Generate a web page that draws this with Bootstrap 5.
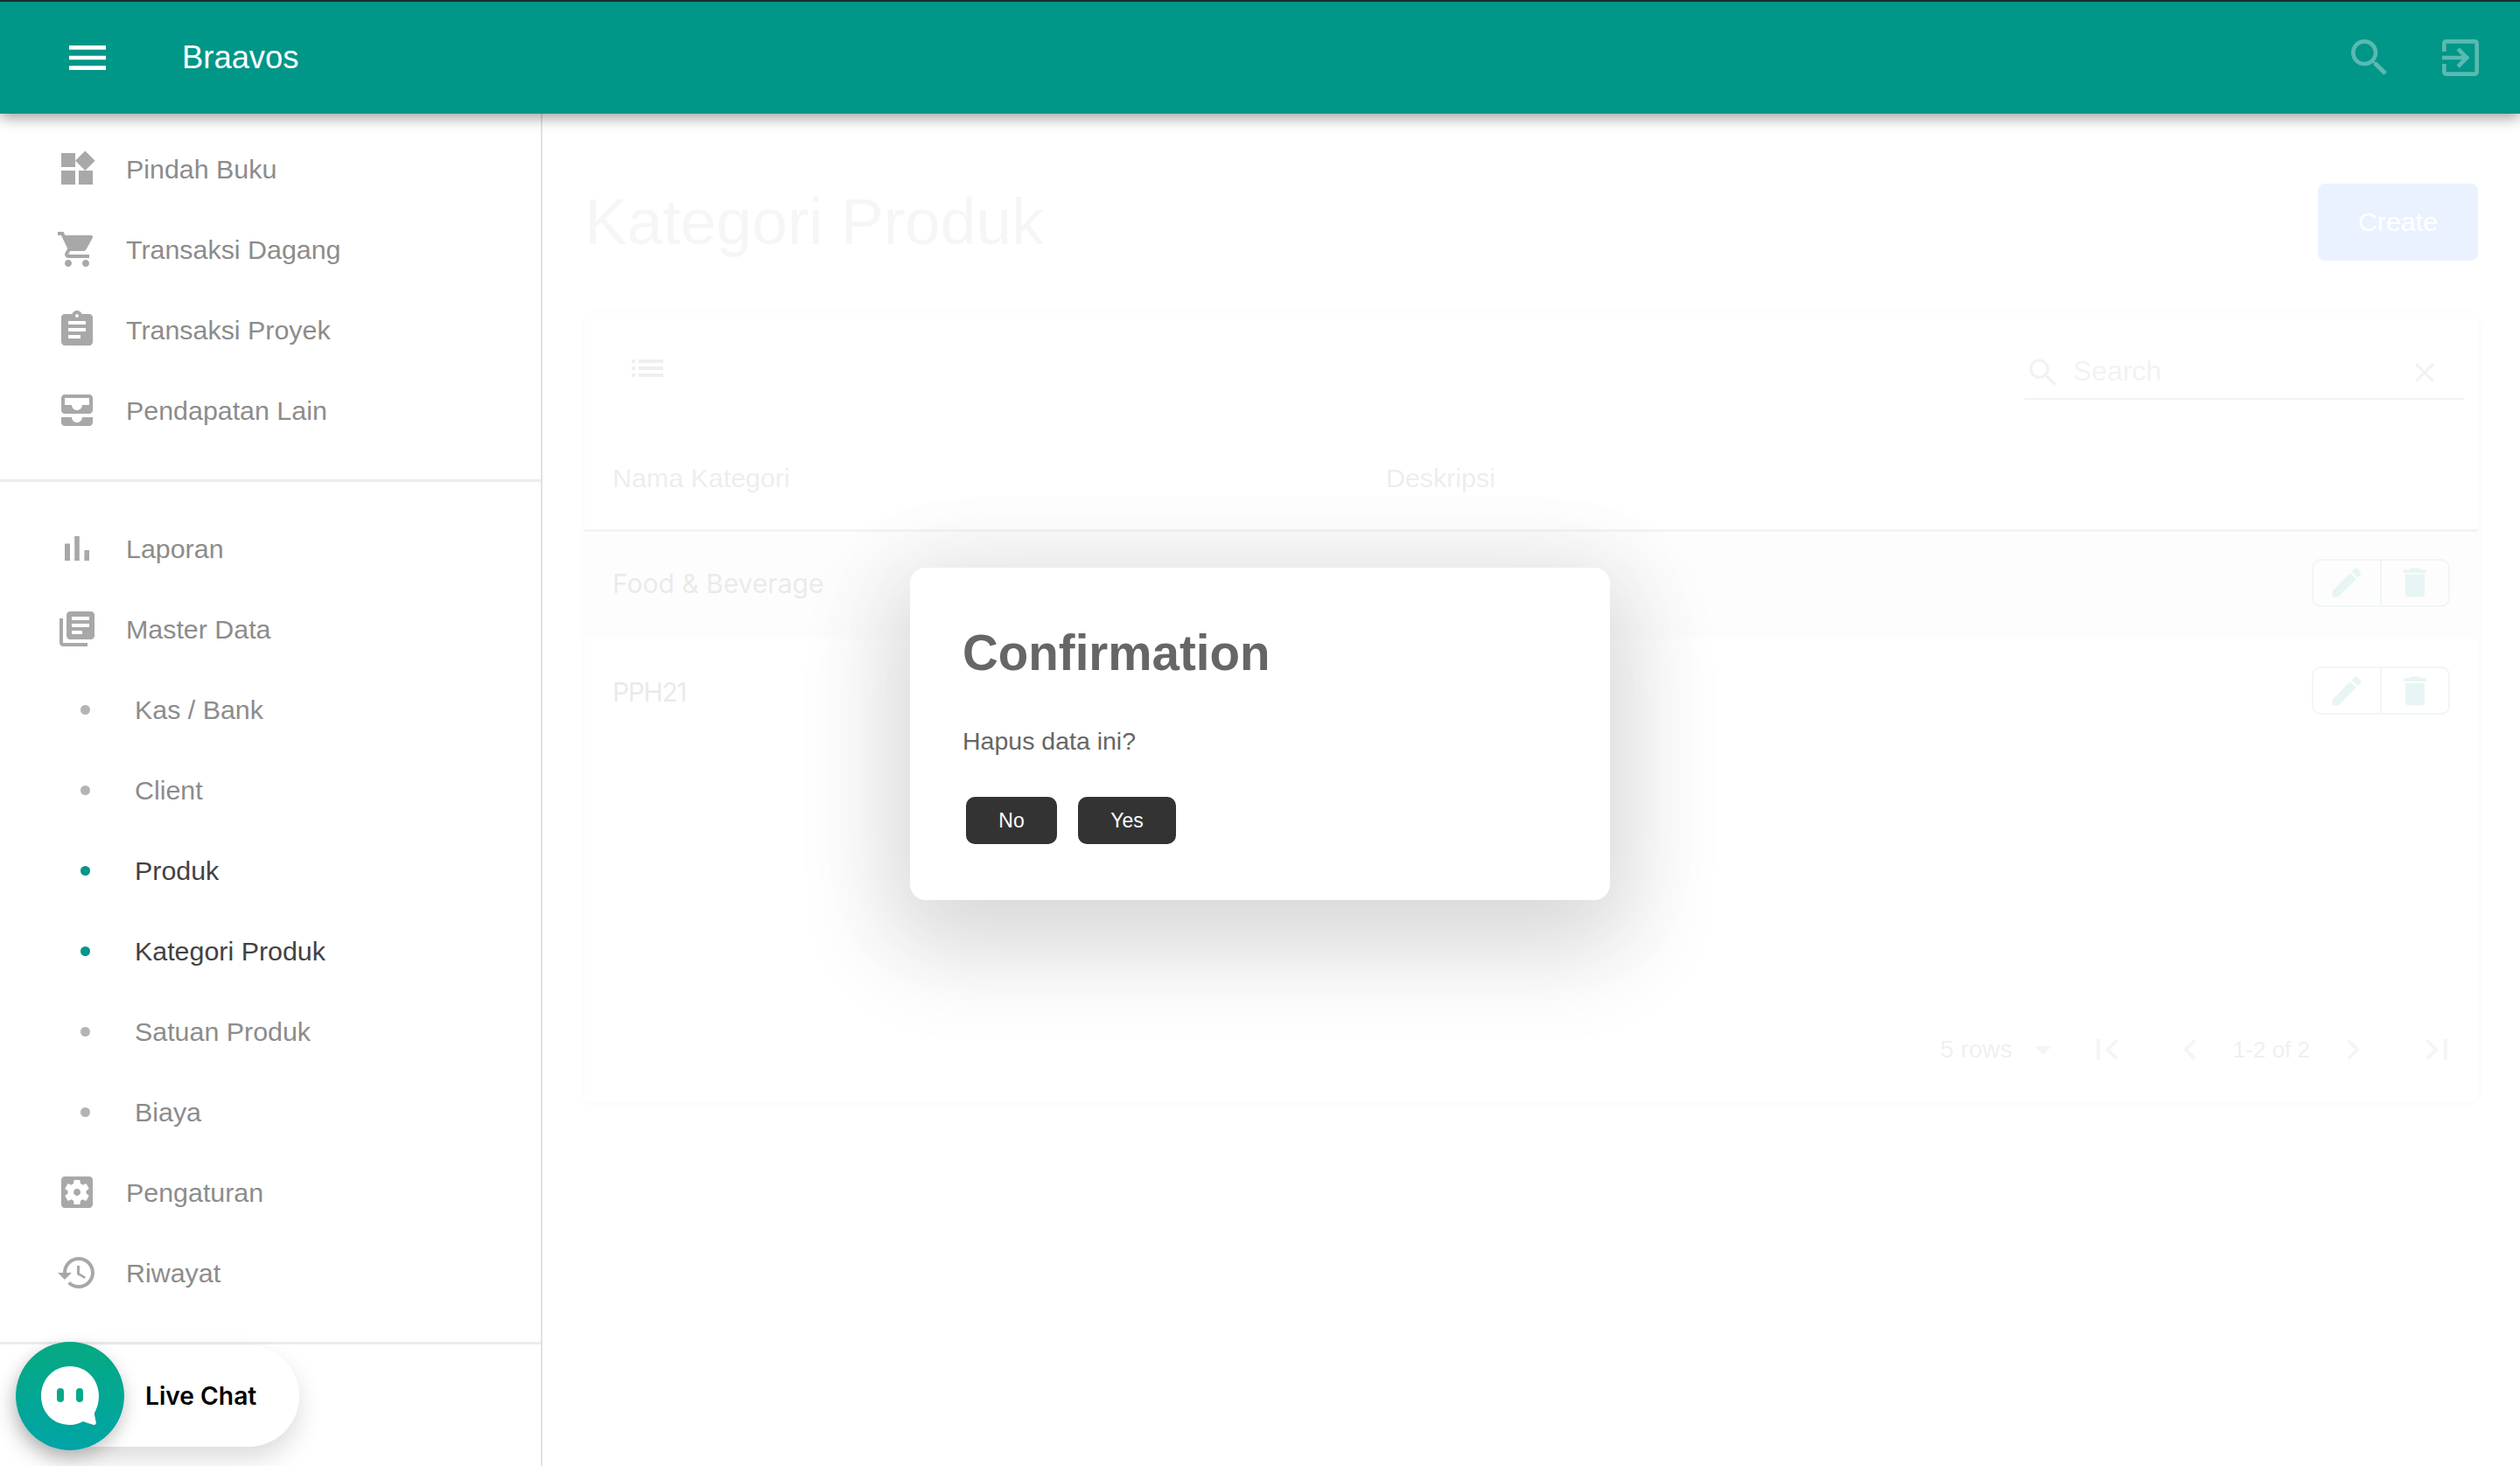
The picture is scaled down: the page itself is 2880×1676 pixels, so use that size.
<!DOCTYPE html>
<html lang="id">
<head>
<meta charset="utf-8">
<title>Braavos</title>
<link href="https://cdn.jsdelivr.net/npm/bootstrap@5.3.0/dist/css/bootstrap.min.css" rel="stylesheet">
<script src="https://cdn.jsdelivr.net/npm/bootstrap@5.3.0/dist/js/bootstrap.bundle.min.js"></script>
<style>
html,body{height:100%}
body{font-family:"Liberation Sans",Arial,sans-serif;background:#fff;overflow:hidden;height:1676px;position:relative}
svg{fill:currentColor;flex:none;display:block}
.bv-top{height:130px;background:#009688;border-top:2px solid #1b2b2a;color:#fff;padding:0 40px 0 72px;box-shadow:0 4px 16px rgba(0,0,0,.4);position:relative;z-index:20}
.bv-brand{font-size:36.4px;margin-left:80px;line-height:1}
.bv-topicon{color:rgba(255,255,255,.35)}
.bv-shell{height:1546px}
.bv-side{width:620px;flex:none;border-right:2px solid #e2e2e2;background:#fff;position:relative;z-index:5;padding-top:17px}
.bv-group{padding-bottom:33px;border-bottom:3px solid #ececec}
.bv-group+.bv-group{padding-top:30px}
.bv-item{height:92px;padding:1px 0 0 64px;border:0;font-size:30.4px;color:#8c8c8c;background:transparent}
.bv-item svg{color:#a8a8a8;margin-right:32px;margin-top:-1px}
.bv-sub{padding-left:92px}
.bv-dot{width:11px;height:11px;border-radius:50%;background:#b4b4b4;margin-right:51px;flex:none}
.bv-on{color:#424242}
.bv-on .bv-dot{background:#009688}
.bv-main{padding:80px 48px 0;position:relative;flex:1 1 auto;min-width:0}
.bv-veil{position:absolute;inset:0;background:rgba(255,255,255,.905);z-index:3}
.bv-title{font-size:73.2px;font-weight:400;color:#9a9a9a;margin:0;line-height:88px}
.bv-create{width:183px;height:88px;background:#2176ff;color:#fff;font-size:30.4px;border:0;border-radius:8px;padding:0}
.bv-panel{margin-top:60px;height:902px;border:0;border-radius:8px;box-shadow:0 1px 8px rgba(0,0,0,.3)}
.bv-bar{height:131px;padding:39px 16px 0 48px}
.bv-listic{color:#555}
.bv-search{width:502px;height:60px;border-bottom:2px solid #7c7c7c}
.bv-search svg{color:#777}
.bv-input{border:0;outline:0;padding:0 0 5px;margin-left:13px;width:383px;font-size:32px;color:#666;background:transparent}
.bv-input::placeholder{color:#7a7a7a;opacity:1}
.bv-tbl{width:100%;margin:0;border-collapse:collapse;table-layout:fixed}
.bv-tbl th{height:117px;padding:1px 0 0 32px;font-size:30.4px;font-weight:400;color:#444;border-bottom:3px solid #61a096;text-align:left;vertical-align:middle}
.bv-tbl td{height:124px;padding:0 0 2px 32px;vertical-align:middle;font-family:Inter,sans-serif;font-size:30px;color:#222;border:0}
.bv-tbl .bv-tight{letter-spacing:-1.4px}
.bv-hover td{background:#e6e6e6}
.bv-tbl .bv-acts{padding:0 32px 5px 0}
.bv-cola{width:884px}
.bv-colc{width:220px}
.bv-btns{width:158px;height:55px;border:2px solid #61a096;border-radius:10px;color:#009688;overflow:hidden;margin-left:auto}
.bv-btns span{flex:1 1 0;height:100%}
.bv-btns span+span{border-left:2px solid #61a096}
.bv-foot{height:120px;padding-right:23px;color:#5a5a5a;font-size:26px;margin-top:auto}
.bv-foot svg{color:#999}
.bv-rows{font-size:28px;margin-right:11px}
.bv-f1{margin:0 47px 0 25px}
.bv-f2{margin:0 25px}
.bv-f3{margin-right:48px}
.bv-layer{position:absolute;inset:0;z-index:30;pointer-events:none}
.bv-dlg{width:800px;height:380px;background:#fff;border-radius:18px;padding:60px 60px 0;margin-top:2px;box-shadow:0 40px 110px 24px rgba(0,0,0,.12),0 12px 110px 26px rgba(0,0,0,.04);pointer-events:auto}
.bv-dlgh{font-size:56.5px;font-weight:700;color:#666;margin:0;line-height:76px}
.bv-dlgp{font-size:28.5px;color:#666;margin:42px 0 0;line-height:40px}
.bv-dbtn{height:54px;background:#333;color:#fff;font-size:23px;border:0;border-radius:10px;padding:0}
.bv-no{width:104px;margin-left:4px}
.bv-yes{width:112px}
.bv-dlgf{margin-top:44px;gap:24px}
.bv-chat{position:absolute;left:18px;top:1534px;height:124px;z-index:40}
.bv-pill{height:116px;width:324px;background:#fff;border-radius:58px;box-shadow:0 14px 30px rgba(0,0,0,.14);font-family:Inter,sans-serif;font-weight:600;font-size:28.2px;color:#000;padding-left:148px}
.bv-round{position:absolute;left:0;top:0;width:124px;height:124px;border-radius:50%;background:linear-gradient(180deg,#05a981 0%,#00a4a6 100%);box-shadow:0 8px 20px rgba(0,0,0,.22)}
</style>
</head>
<body>
<nav class="bv-top d-flex align-items-center justify-content-between">
  <div class="d-flex align-items-center">
    <svg width="56" height="56" viewBox="0 0 24 24"><path d="M3 18h18v-2H3v2zm0-5h18v-2H3v2zm0-7v2h18V6H3z"/></svg>
    <span class="bv-brand">Braavos</span>
  </div>
  <div class="d-flex align-items-center bv-topicon gap-5">
    <svg width="56" height="56" viewBox="0 0 24 24"><path d="M15.5 14h-.79l-.28-.27C15.41 12.59 16 11.11 16 9.5 16 5.91 13.09 3 9.5 3S3 5.91 3 9.5 5.91 16 9.5 16c1.61 0 3.09-.59 4.23-1.57l.27.28v.79l5 4.99L20.49 19l-4.99-5zm-6 0C7.01 14 5 11.99 5 9.5S7.01 5 9.5 5 14 7.01 14 9.5 11.99 14 9.5 14z"/></svg>
    <svg width="56" height="56" viewBox="0 0 24 24"><path d="M10.09 15.59L11.5 17l5-5-5-5-1.41 1.41L12.67 11H3v2h9.67l-2.58 2.59zM19 3H5c-1.11 0-2 .9-2 2v4h2V5h14v14H5v-4H3v4c0 1.1.89 2 2 2h14c1.1 0 2-.9 2-2V5c0-1.1-.9-2-2-2z"/></svg>
  </div>
</nav>
<div class="bv-shell d-flex">
  <aside class="bv-side">
    <div class="list-group list-group-flush bv-group">
      <a class="list-group-item bv-item d-flex align-items-center"><svg width="48" height="48" viewBox="0 0 24 24"><path d="M13 13v8h8v-8h-8zM3 21h8v-8H3v8zM3 3v8h8V3H3zm13.66-1.31L11 7.34 16.66 13l5.66-5.66-5.66-5.65z"/></svg>Pindah Buku</a>
      <a class="list-group-item bv-item d-flex align-items-center"><svg width="48" height="48" viewBox="0 0 24 24"><path d="M7 18c-1.1 0-1.99.9-1.99 2S5.9 22 7 22s2-.9 2-2-.9-2-2-2zM1 2v2h2l3.6 7.59-1.35 2.45c-.16.28-.25.61-.25.96 0 1.1.9 2 2 2h12v-2H7.42c-.14 0-.25-.11-.25-.25l.03-.12.9-1.63h7.45c.75 0 1.41-.41 1.75-1.03l3.58-6.49c.08-.14.12-.31.12-.48 0-.55-.45-1-1-1H5.21l-.94-2H1zm16 16c-1.1 0-1.99.9-1.99 2s.89 2 1.99 2 2-.9 2-2-.9-2-2-2z"/></svg>Transaksi Dagang</a>
      <a class="list-group-item bv-item d-flex align-items-center"><svg width="48" height="48" viewBox="0 0 24 24"><path d="M19 3h-4.18C14.4 1.84 13.3 1 12 1c-1.3 0-2.4.84-2.82 2H5c-1.1 0-2 .9-2 2v14c0 1.1.9 2 2 2h14c1.1 0 2-.9 2-2V5c0-1.1-.9-2-2-2zm-7 0c.55 0 1 .45 1 1s-.45 1-1 1-1-.45-1-1 .45-1 1-1zm2 14H7v-2h7v2zm3-4H7v-2h10v2zm0-4H7V7h10v2z"/></svg>Transaksi Proyek</a>
      <a class="list-group-item bv-item d-flex align-items-center"><svg width="48" height="48" viewBox="0 0 24 24"><path d="M19 3H5c-1.1 0-2 .9-2 2v7c0 1.1.9 2 2 2h14c1.1 0 2-.9 2-2V5c0-1.1-.9-2-2-2zm0 6h-4c0 1.62-1.38 3-3 3s-3-1.38-3-3H5V5h14v4zm-4 7h6v3c0 1.1-.9 2-2 2H5c-1.1 0-2-.9-2-2v-3h6c0 1.66 1.34 3 3 3s3-1.34 3-3z"/></svg>Pendapatan Lain</a>
    </div>
    <div class="list-group list-group-flush bv-group">
      <a class="list-group-item bv-item d-flex align-items-center"><svg width="48" height="48" viewBox="0 0 24 24"><path d="M5 9.2h3V19H5zM10.6 5h2.8v14h-2.8zm5.6 8H19v6h-2.8z"/></svg>Laporan</a>
      <a class="list-group-item bv-item d-flex align-items-center"><svg width="48" height="48" viewBox="0 0 24 24"><path d="M4 6H2v14c0 1.1.9 2 2 2h14v-2H4V6zm16-4H8c-1.1 0-2 .9-2 2v12c0 1.1.9 2 2 2h12c1.1 0 2-.9 2-2V4c0-1.1-.9-2-2-2zm-1 9H9V9h10v2zm-4 4H9v-2h6v2zm4-8H9V5h10v2z"/></svg>Master Data</a>
      <a class="list-group-item bv-item bv-sub d-flex align-items-center"><span class="bv-dot"></span>Kas / Bank</a>
      <a class="list-group-item bv-item bv-sub d-flex align-items-center"><span class="bv-dot"></span>Client</a>
      <a class="list-group-item bv-item bv-sub bv-on d-flex align-items-center"><span class="bv-dot"></span>Produk</a>
      <a class="list-group-item bv-item bv-sub bv-on d-flex align-items-center"><span class="bv-dot"></span>Kategori Produk</a>
      <a class="list-group-item bv-item bv-sub d-flex align-items-center"><span class="bv-dot"></span>Satuan Produk</a>
      <a class="list-group-item bv-item bv-sub d-flex align-items-center"><span class="bv-dot"></span>Biaya</a>
      <a class="list-group-item bv-item d-flex align-items-center"><svg width="48" height="48" viewBox="0 0 24 24"><path d="M12 10c-1.1 0-2 .9-2 2s.9 2 2 2 2-.9 2-2-.9-2-2-2zm7-7H5c-1.11 0-2 .9-2 2v14c0 1.1.89 2 2 2h14c1.11 0 2-.9 2-2V5c0-1.1-.89-2-2-2zm-1.75 9c0 .23-.02.46-.05.68l1.48 1.16c.13.11.17.3.08.45l-1.4 2.42c-.09.15-.27.21-.43.15l-1.74-.7c-.36.28-.76.51-1.18.69l-.26 1.85c-.03.17-.18.3-.35.3h-2.8c-.17 0-.32-.13-.35-.29l-.26-1.85c-.43-.18-.82-.41-1.18-.69l-1.74.7c-.16.06-.34 0-.43-.15l-1.4-2.42c-.09-.15-.05-.34.08-.45l1.48-1.16c-.03-.23-.05-.46-.05-.69 0-.23.02-.46.05-.68l-1.48-1.16c-.13-.11-.17-.3-.08-.45l1.4-2.42c.09-.15.27-.21.43-.15l1.74.7c.36-.28.76-.51 1.18-.69l.26-1.85c.03-.17.18-.3.35-.3h2.8c.17 0 .32.13.35.29l.26 1.85c.43.18.82.41 1.18.69l1.74-.7c.16-.06.34 0 .43.15l1.4 2.42c.09.15.05.34-.08.45l-1.48 1.16c.03.23.05.46.05.69z"/></svg>Pengaturan</a>
      <a class="list-group-item bv-item d-flex align-items-center"><svg width="48" height="48" viewBox="0 0 24 24"><path d="M13 3c-4.97 0-9 4.03-9 9H1l3.89 3.89.07.14L9 12H6c0-3.87 3.13-7 7-7s7 3.13 7 7-3.13 7-7 7c-1.93 0-3.68-.79-4.94-2.06l-1.42 1.42C8.27 19.99 10.51 21 13 21c4.97 0 9-4.03 9-9s-4.03-9-9-9zm-1 5v5l4.28 2.54.72-1.21-3.5-2.08V8H12z"/></svg>Riwayat</a>
    </div>
  </aside>
  <main class="bv-main d-flex flex-column">
    <div class="d-flex justify-content-between align-items-center">
      <h1 class="bv-title">Kategori Produk</h1>
      <button class="btn bv-create" type="button">Create</button>
    </div>
    <div class="card bv-panel">
      <div class="bv-bar d-flex justify-content-between align-items-start">
        <svg class="bv-listic" width="48" height="48" viewBox="0 0 24 24"><path d="M3 13h2v-2H3v2zm0 4h2v-2H3v2zm0-8h2V7H3v2zm4 4h14v-2H7v2zm0 4h14v-2H7v2zM7 7v2h14V7H7z"/></svg>
        <div class="bv-search d-flex align-items-center">
          <svg width="42" height="42" viewBox="0 0 24 24"><path d="M15.5 14h-.79l-.28-.27C15.41 12.59 16 11.11 16 9.5 16 5.91 13.09 3 9.5 3S3 5.91 3 9.5 5.91 16 9.5 16c1.61 0 3.09-.59 4.23-1.57l.27.28v.79l5 4.99L20.49 19l-4.99-5zm-6 0C7.01 14 5 11.99 5 9.5S7.01 5 9.5 5 14 7.01 14 9.5 11.99 14 9.5 14z"/></svg>
          <input class="bv-input" type="text" placeholder="Search">
          <svg width="38" height="38" viewBox="0 0 24 24"><path d="M19 6.41L17.59 5 12 10.59 6.41 5 5 6.41 10.59 12 5 17.59 6.41 19 12 13.41 17.59 19 19 17.59 13.41 12z"/></svg>
        </div>
      </div>
      <table class="bv-tbl">
        <colgroup><col class="bv-cola"><col><col class="bv-colc"></colgroup>
        <thead><tr><th>Nama Kategori</th><th>Deskripsi</th><th></th></tr></thead>
        <tbody>
          <tr class="bv-hover"><td>Food &amp; Beverage</td><td></td><td class="bv-acts"><div class="bv-btns d-flex">
            <span class="d-flex align-items-center justify-content-center"><svg width="44" height="44" viewBox="0 0 24 24"><path d="M3 17.25V21h3.75L17.81 9.94l-3.75-3.75L3 17.25zM20.71 7.04c.39-.39.39-1.02 0-1.41l-2.34-2.34c-.39-.39-1.02-.39-1.41 0l-1.83 1.83 3.75 3.75 1.83-1.83z"/></svg></span>
            <span class="d-flex align-items-center justify-content-center"><svg width="44" height="44" viewBox="0 0 24 24"><path d="M6 19c0 1.1.9 2 2 2h8c1.1 0 2-.9 2-2V7H6v12zM19 4h-3.5l-1-1h-5l-1 1H5v2h14V4z"/></svg></span>
          </div></td></tr>
          <tr><td class="bv-tight">PPH21</td><td></td><td class="bv-acts"><div class="bv-btns d-flex">
            <span class="d-flex align-items-center justify-content-center"><svg width="44" height="44" viewBox="0 0 24 24"><path d="M3 17.25V21h3.75L17.81 9.94l-3.75-3.75L3 17.25zM20.71 7.04c.39-.39.39-1.02 0-1.41l-2.34-2.34c-.39-.39-1.02-.39-1.41 0l-1.83 1.83 3.75 3.75 1.83-1.83z"/></svg></span>
            <span class="d-flex align-items-center justify-content-center"><svg width="44" height="44" viewBox="0 0 24 24"><path d="M6 19c0 1.1.9 2 2 2h8c1.1 0 2-.9 2-2V7H6v12zM19 4h-3.5l-1-1h-5l-1 1H5v2h14V4z"/></svg></span>
          </div></td></tr>
        </tbody>
      </table>
      <div class="bv-foot d-flex justify-content-end align-items-center">
        <span class="bv-rows">5 rows</span>
        <svg width="48" height="48" viewBox="0 0 24 24"><path d="M7 10l5 5 5-5z"/></svg>
        <svg class="bv-f1" width="48" height="48" viewBox="0 0 24 24"><path d="M18.41 16.59L13.83 12l4.58-4.59L17 6l-6 6 6 6 1.41-1.41zM6 6h2v12H6V6z"/></svg>
        <svg width="48" height="48" viewBox="0 0 24 24"><path d="M15.41 7.41L14 6l-6 6 6 6 1.41-1.41L10.83 12z"/></svg>
        <span class="bv-f2">1-2 of 2</span>
        <svg class="bv-f3" width="48" height="48" viewBox="0 0 24 24"><path d="M10 6L8.59 7.41 13.17 12l-4.58 4.59L10 18l6-6z"/></svg>
        <svg width="48" height="48" viewBox="0 0 24 24"><path d="M5.59 7.41L10.17 12l-4.58 4.59L7 18l6-6-6-6zM16 6h2v12h-2z"/></svg>
      </div>
    </div>
    <div class="bv-veil"></div>
  </main>
</div>
<div class="bv-layer d-flex align-items-center justify-content-center">
  <div class="bv-dlg" role="dialog">
    <h2 class="bv-dlgh">Confirmation</h2>
    <p class="bv-dlgp">Hapus data ini?</p>
    <div class="d-flex bv-dlgf">
      <button class="btn bv-dbtn bv-no" type="button">No</button>
      <button class="btn bv-dbtn bv-yes" type="button">Yes</button>
    </div>
  </div>
</div>
<div class="bv-chat">
  <div class="bv-pill d-flex align-items-center mt-1">Live Chat</div>
  <div class="bv-round d-flex align-items-center justify-content-center">
    <svg width="72" height="72" viewBox="0 0 72 72"><path fill="#fff" d="M36 2C17 2 3 17 3 36s14 33 33 33c6 0 11-2 15-4 3 1 8 3 12 4 2 .3 3-1 2.700-3l-2-10C67 50 69 43 69 36 69 17 55 2 36 2z"/><rect x="21" y="27" width="8" height="16" rx="4" fill="#05a98a"/><rect x="43" y="27" width="8" height="16" rx="4" fill="#05a98a"/></svg>
  </div>
</div>
</body>
</html>
